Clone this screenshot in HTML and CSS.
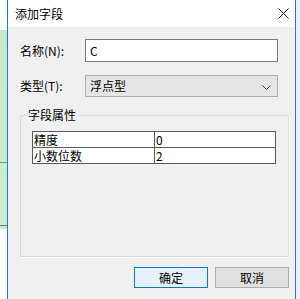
FILE: index.html
```html
<!DOCTYPE html>
<html lang="zh-CN">
<head>
  <meta charset="UTF-8">
  <link rel="stylesheet" href="styles.css">
</head>
<body>
  <div class="screen">
    <div class="desk-left"></div>
    <div class="dialog">
      <div class="titlebar">
        <span class="title">添加字段</span>
        <svg class="close" width="11" height="11" viewBox="0 0 11 11">
          <path d="M0.5 0.5 L10.5 10.5 M10.5 0.5 L0.5 10.5" stroke="#111" stroke-width="1" fill="none"/>
        </svg>
      </div>
      <div class="client">
        <div class="row">
          <label class="label">名称(N):</label>
          <div class="input">C</div>
        </div>
        <div class="row row-type">
          <label class="label">类型(T):</label>
          <div class="select">
            <span>浮点型</span>
            <svg class="chevron" width="9" height="5" viewBox="0 0 9 5">
              <path d="M0.5 0.5 L4.5 4.5 L8.5 0.5" stroke="#333" stroke-width="1" fill="none"/>
            </svg>
          </div>
        </div>
        <fieldset class="group">
          <legend>字段属性</legend>
          <table class="props">
            <tr><td class="key">精度</td><td>0</td></tr>
            <tr><td class="key">小数位数</td><td>2</td></tr>
          </table>
        </fieldset>
        <div class="buttons">
          <button class="btn btn-primary">确定</button>
          <button class="btn">取消</button>
        </div>
      </div>
    </div>
    <div class="desk-right"></div>
  </div>
</body>
</html>
```

FILE: styles.css
```css
/* Page */
html, body {
  margin: 0;
  padding: 0;
  background: #fff;
}
.screen {
  display: flex;
  width: 300px;
  height: 299px;
  overflow: hidden;
  font-family: "Noto Sans CJK SC", "Liberation Sans", sans-serif;
  font-size: 12px;
  color: #000;
}
/* Desktop bits around the dialog */
.desk-left {
  width: 7px;
  flex: none;
  background:
    linear-gradient(to bottom, transparent 162px, #8a8a8a 162px, #8a8a8a 163px, transparent 163px),
    linear-gradient(to bottom, transparent 225px, #7a7a7a 225px, #7a7a7a 226px, transparent 226px),
    linear-gradient(to bottom, #fff 0, #fff 30px, #c4ecc9 30px, #c9eecd 229px, #fff 229px);
}
.desk-right {
  flex: 1;
  background: #e9f1fa;
}
/* Dialog window */
.dialog {
  width: 289px;
  flex: none;
  box-sizing: border-box;
  border-left: 1px solid #1d7bd3;
  border-right: 1px solid #1d7bd3;
  display: flex;
  flex-direction: column;
  background: #f0f0f0;
}
.titlebar {
  height: 27px;
  flex: none;
  background: #fff;
  display: flex;
  align-items: center;
  padding-left: 7px;
}
.title {
  line-height: 16px;
}
.close {
  margin-left: auto;
  margin-right: 6px;
}
/* Client area */
.client {
  flex: 1;
  padding: 12px 6px 0 12px;
}
.row {
  display: flex;
  align-items: center;
}
.row-type {
  margin-top: 13px;
}
.label {
  width: 65px;
  flex: none;
  line-height: 16px;
}
.input {
  width: 193px;
  height: 23px;
  box-sizing: border-box;
  border: 1px solid #7a7a7a;
  background: #fff;
  padding-left: 4px;
  line-height: 21px;
}
.select {
  width: 193px;
  height: 22px;
  box-sizing: border-box;
  border: 1px solid #adadad;
  background: #e5e5e5;
  padding: 0 6px 0 4px;
  display: flex;
  align-items: center;
  justify-content: space-between;
  line-height: 20px;
}
.chevron {
  margin-top: 2px;
}
/* Group box */
.group {
  width: 269px;
  box-sizing: border-box;
  margin: 10px 0 0 0;
  padding: 8px 11px 92px 11px;
  border: 1px solid #dcdcdc;
  box-shadow: 1px 1px 0 #fff;
}
.group legend {
  margin-left: -6px;
  padding: 0 2px;
  line-height: 16px;
}
.props {
  width: 244px;
  border-collapse: collapse;
  background: #fff;
  border: 1px solid #5a5a5a;
}
.props td {
  border: 1px solid #5a5a5a;
  height: 15px;
  padding: 0 0 0 1px;
  line-height: 15px;
}
.props td.key {
  width: 120px;
}
/* Buttons */
.buttons {
  display: flex;
  justify-content: flex-end;
  gap: 7px;
  margin-top: 10px;
}
.btn {
  width: 74px;
  height: 21px;
  box-sizing: border-box;
  border: 1px solid #adadad;
  background: #e1e1e1;
  font-family: inherit;
  font-size: 12px;
  color: #000;
  padding: 0;
  line-height: 19px;
}
.btn-primary {
  border-color: #0078d7;
  background: #e5f1fb;
}
```
